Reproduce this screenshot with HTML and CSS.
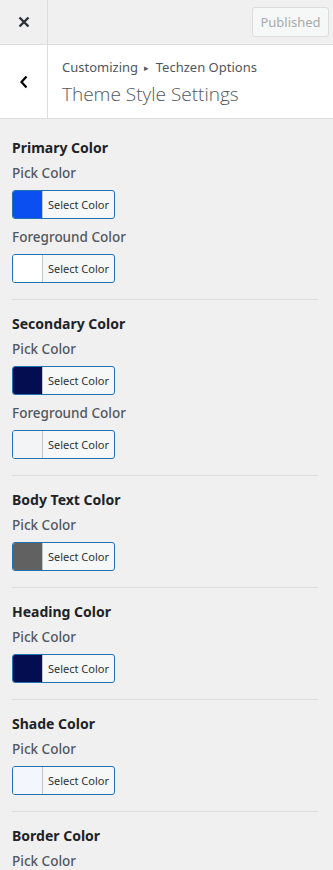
FILE: index.html
```html
<!DOCTYPE html>
<html>
<head>
<meta charset="utf-8">
<link rel="stylesheet" href="styles.css">
</head>
<body>
<div class="panel">
  <header class="topbar">
    <button class="close-btn" aria-label="Close">
      <svg width="12" height="12" viewBox="0 0 12 12"><path d="M1.5 1.5 L10.5 10.5 M10.5 1.5 L1.5 10.5" stroke="#2c3338" stroke-width="2.4" stroke-linecap="butt"/></svg>
    </button>
    <div class="topbar-actions">
      <button class="published" disabled>Published</button>
    </div>
  </header>
  <div class="section-head">
    <button class="back-btn" aria-label="Back">
      <svg width="10" height="14" viewBox="0 0 10 14"><path d="M7.5 1.5 L2.5 7 L7.5 12.5" stroke="#000" stroke-width="2.2" fill="none"/></svg>
    </button>
    <div class="titles">
      <div class="crumb">Customizing <span class="arrow">▸</span> Techzen Options</div>
      <div class="title">Theme Style Settings</div>
    </div>
  </div>
  <div class="content">
    <section class="group">
      <h3 class="group-title">Primary Color</h3>
      <div class="field">
        <div class="label">Pick Color</div>
        <button class="picker"><span class="swatch" style="background:#0c4ff0"></span><span class="picker-text">Select Color</span></button>
      </div>
      <div class="field">
        <div class="label">Foreground Color</div>
        <button class="picker"><span class="swatch" style="background:#ffffff"></span><span class="picker-text">Select Color</span></button>
      </div>
    </section>
    <section class="group">
      <h3 class="group-title">Secondary Color</h3>
      <div class="field">
        <div class="label">Pick Color</div>
        <button class="picker"><span class="swatch" style="background:#030d4f"></span><span class="picker-text">Select Color</span></button>
      </div>
      <div class="field">
        <div class="label">Foreground Color</div>
        <button class="picker"><span class="swatch" style="background:#f2f4f5"></span><span class="picker-text">Select Color</span></button>
      </div>
    </section>
    <section class="group">
      <h3 class="group-title">Body Text Color</h3>
      <div class="field">
        <div class="label">Pick Color</div>
        <button class="picker"><span class="swatch" style="background:#616161"></span><span class="picker-text">Select Color</span></button>
      </div>
    </section>
    <section class="group">
      <h3 class="group-title">Heading Color</h3>
      <div class="field">
        <div class="label">Pick Color</div>
        <button class="picker"><span class="swatch" style="background:#030d4f"></span><span class="picker-text">Select Color</span></button>
      </div>
    </section>
    <section class="group">
      <h3 class="group-title">Shade Color</h3>
      <div class="field">
        <div class="label">Pick Color</div>
        <button class="picker"><span class="swatch" style="background:#f3f7fd"></span><span class="picker-text">Select Color</span></button>
      </div>
    </section>
    <section class="group">
      <h3 class="group-title">Border Color</h3>
      <div class="field">
        <div class="label">Pick Color</div>
        <button class="picker"><span class="swatch" style="background:#e8eaf0"></span><span class="picker-text">Select Color</span></button>
      </div>
    </section>
  </div>
</div>
</body>
</html>
```
FILE: styles.css
```css
* { box-sizing: border-box; }
html, body { margin: 0; padding: 0; }
body {
  background: #f0f0f1;
  font-family: "Noto Sans", "Open Sans", sans-serif;
  color: #1d2327;
  width: 333px;
  height: 870px;
  overflow: hidden;
}
button { font-family: inherit; }
.topbar {
  display: flex;
  height: 45px;
  border-bottom: 1px solid #dcdcde;
  background: #f0f0f1;
}
.close-btn {
  width: 48px;
  height: 44px;
  border: 0;
  border-right: 1px solid #dcdcde;
  background: transparent;
  display: flex;
  align-items: center;
  justify-content: center;
  padding: 0;
}
.topbar-actions {
  flex: 1;
  display: flex;
  justify-content: flex-end;
  align-items: center;
  padding-right: 4px;
}
.published {
  width: 77px;
  height: 30px;
  border: 1px solid #dcdcde;
  border-radius: 3px;
  background: #f6f7f7;
  color: #a7aaad;
  font-size: 13px;
  padding: 0;
}
.section-head {
  display: flex;
  height: 74px;
  background: #fff;
  border-bottom: 1px solid #dcdcde;
}
.back-btn {
  width: 48px;
  border: 0;
  border-right: 1px solid #dcdcde;
  background: #fff;
  display: flex;
  align-items: center;
  justify-content: center;
  padding: 0;
}
.titles {
  padding: 13px 0 0 14px;
}
.crumb {
  font-size: 13px;
  color: #50575e;
  line-height: 18px;
}
.arrow { font-size: 9px; margin: 0 3px; position: relative; top: -1px; }
.title {
  font-size: 19px;
  font-weight: 300;
  color: #50575e;
  line-height: 26px;
  margin-top: 3px;
  font-family: "Open Sans", "Noto Sans", sans-serif;
}
.content {
  padding: 0 15px 0 12px;
}
.group {
  border-bottom: 1px solid #dcdcde;
  padding: 19px 0 16px;
}
.group:first-child { padding-top: 24px; }
.group-title {
  margin: 0;
  font-size: 14px;
  font-weight: 700;
  line-height: 10px;
  color: #1d2327;
}
.field { margin-top: 9px; }
.field + .field { margin-top: 7px; }
.label {
  font-size: 13.5px;
  font-weight: 500;
  color: #50575e;
  line-height: 22px;
}
.picker {
  margin-top: 6px;
  display: flex;
  width: 103px;
  height: 29px;
  padding: 0;
  border: 1px solid #2271b1;
  border-radius: 3px;
  background: #f6f7f7;
  overflow: hidden;
  align-items: stretch;
}
.swatch {
  width: 30px;
  border-right: 1px solid #c3c4c7;
}
.picker-text {
  flex: 1;
  font-size: 11px;
  color: #2c3338;
  display: flex;
  align-items: center;
  justify-content: center;
}
```
